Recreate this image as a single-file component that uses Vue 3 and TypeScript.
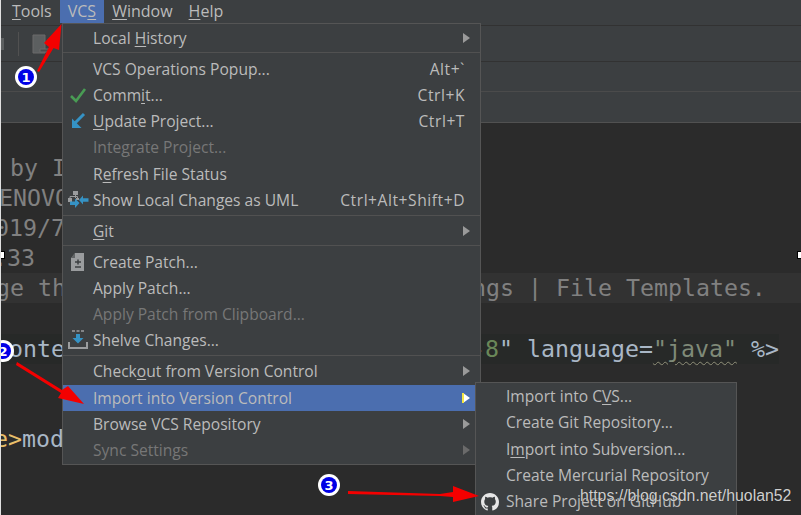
<script setup lang="ts">
type Seg = { t: string; u?: boolean };
type Item = { sep?: boolean; label?: Seg[]; key?: string; sub?: boolean; off?: boolean; active?: boolean; icon?: string };
const s = (a: string, u = '', b = ''): Seg[] => [{ t: a }, { t: u, u: true }, { t: b }];
const items: Item[] = [
  { label: s('Local ', 'H', 'istory'), sub: true },
  { sep: true },
  { label: s('VCS Operations Popup...'), key: 'Alt+`' },
  { label: s('Comm', 'i', 't...'), key: 'Ctrl+K', icon: 'check' },
  { label: s('', 'U', 'pdate Project...'), key: 'Ctrl+T', icon: 'update' },
  { label: s('Inte', 'g', 'rate Project...'), off: true },
  { label: s('R', 'e', 'fresh File Status') },
  { label: s('Show Local Changes as UML'), key: 'Ctrl+Alt+Shift+D', icon: 'uml' },
  { sep: true },
  { label: s('', 'G', 'it'), sub: true },
  { sep: true },
  { label: s('Create Patch...'), icon: 'patch' },
  { label: s('Apply Patch...') },
  { label: s('Apply Patch from Clipboard...'), off: true },
  { label: s('Shelve Changes...'), icon: 'shelve' },
  { sep: true },
  { label: s('Check', 'o', 'ut from Version Control'), sub: true },
  { label: s('Import into Version Control'), sub: true, active: true },
  { label: s('Browse VCS Repository'), sub: true },
  { label: s('Sync Settings'), sub: true, off: true }
];
const subItems: { label: Seg[]; git?: boolean }[] = [
  { label: s('Import into C', 'V', 'S...') },
  { label: s('Create Git Repository...') },
  { label: s('I', 'm', 'port into Subversion...') },
  { label: s('Create Mercurial Repository') },
  { label: s('Share Project on GitHub'), git: true }
];
const bandLine = 'ge this template  use File | Settings | File Templates.';
</script>

<template>
  <div class="app">
    <header class="menubar">
      <span class="top"><u>T</u>ools</span>
      <span class="top on">VC<u>S</u></span>
      <span class="top"><u>W</u>indow</span>
      <span class="top"><u>H</u>elp</span>
    </header>
    <div class="toolbar">
      <i class="stub"></i>
      <i class="vline"></i>
      <svg class="device" width="20" height="20" viewBox="0 0 20 20">
        <path d="M1 1h12v18H1z" fill="#5c5f60" stroke="#6a6a6a" />
        <path d="M8 15h10v3H8z" fill="#4a4c4d" stroke="#6a6a6a" />
      </svg>
    </div>
    <div class="bar nav"></div>
    <div class="bar tabs"></div>
    <main class="editor">
      <div class="code gray shift-a">by I</div>
      <div class="code gray shift-b">ENOVO</div>
      <div class="code gray shift-c">019/7</div>
      <div class="code gray shift-d">.33</div>
      <div class="code gray band shift-e">{{ bandLine }}</div>
      <div class="code"></div>
      <div class="code dark shift-f">ontentType="text/html;charset=UTF-<span class="grn">8</span>" language=<span class="wavy">"java"</span> %&gt;</div>
      <div class="code"></div>
      <div class="code"></div>
      <div class="code shift-g"><span class="org">e&gt;</span>mod</div>
    </main>

    <nav class="menu">
      <template v-for="(it, i) in items" :key="i">
        <div v-if="it.sep" class="sep"></div>
        <div v-else class="row" :class="{ off: it.off, active: it.active }">
          <span class="ico">
            <svg v-if="it.icon === 'check'" width="18" height="18" viewBox="0 0 18 18">
              <path d="M2 10l5 5L16 3" fill="none" stroke="#499c54" stroke-width="2.6" />
            </svg>
            <svg v-else-if="it.icon === 'update'" width="18" height="18" viewBox="0 0 18 18">
              <path d="M15 2L6 11" fill="none" stroke="#3592c4" stroke-width="3" />
              <path d="M3 6.500V16h9.500z" fill="#3592c4" />
            </svg>
            <svg v-else-if="it.icon === 'uml'" width="22" height="20" viewBox="0 0 22 20">
              <path d="M6 1h5v4H6zM1 8h4v4H1zM9 8h3v2H9z" fill="#9a9c9e" />
              <path d="M8.500 5v3M3 8V6.500h7.500V8" stroke="#9a9c9e" fill="none" />
              <path d="M12 10l4-4.500v2.800h5.500v3.400H16V14.500z" fill="#3592c4" />
              <path d="M12.500 13l-4.500 5v-3H3v-3.500h5V8.500z" fill="#3592c4" />
            </svg>
            <svg v-else-if="it.icon === 'patch'" width="16" height="20" viewBox="0 0 16 20">
              <path d="M5 1h9v18H1V6z" fill="#9a9c9e" />
              <path d="M5 1v5H1z" fill="#3c3f41" opacity=".6" />
              <path d="M5 10h6M8 7.500v5M5 15h6" stroke="#3c3f41" stroke-width="1.500" fill="none" />
            </svg>
            <svg v-else-if="it.icon === 'shelve'" width="20" height="20" viewBox="0 0 20 20">
              <path d="M4 1h3M8.500 1h3M13 1h3" stroke="#9a9c9e" stroke-width="1.500" />
              <path d="M8 4h4v4h3.500L10 13.500 4.500 8H8z" fill="#3592c4" />
              <path d="M1 12v6h18v-6" fill="none" stroke="#9a9c9e" stroke-width="2" />
            </svg>
          </span>
          <span class="txt"><template v-for="(g, j) in it.label" :key="j"><u v-if="g.u">{{ g.t }}</u><template v-else>{{ g.t }}</template></template></span>
          <span v-if="it.key" class="key">{{ it.key }}</span>
          <i v-if="it.sub" class="tri"></i>
        </div>
      </template>
    </nav>

    <nav class="submenu">
      <div v-for="(it, i) in subItems" :key="i" class="subrow">
        <svg v-if="it.git" class="git" width="18" height="18" viewBox="0 0 16 16">
          <path fill="#e6e6e6" d="M8 0C3.580 0 0 3.580 0 8c0 3.540 2.290 6.530 5.470 7.590.4.070.55-.170.55-.380 0-.190-.010-.820-.010-1.490-2.010.370-2.530-.490-2.690-.940-.090-.230-.480-.940-.820-1.130-.280-.150-.680-.520-.010-.530.630-.010 1.080.580 1.230.820.720 1.210 1.870.870 2.330.660.070-.520.280-.870.510-1.070-1.780-.200-3.640-.890-3.640-3.950 0-.870.310-1.590.820-2.150-.080-.200-.360-1.020.080-2.120 0 0 .670-.210 2.200.820.640-.180 1.320-.270 2-.270s1.360.090 2 .270c1.530-1.040 2.200-.820 2.200-.820.440 1.100.160 1.920.080 2.120.510.560.820 1.270.820 2.150 0 3.070-1.870 3.750-3.650 3.950.290.250.540.730.540 1.480 0 1.070-.010 1.930-.010 2.200 0 .210.150.460.550.380A8.010 8.010 0 0 0 16 8c0-4.420-3.580-8-8-8z" />
        </svg>
        <span><template v-for="(g, j) in it.label" :key="j"><u v-if="g.u">{{ g.t }}</u><template v-else>{{ g.t }}</template></template></span>
      </div>
    </nav>

    <i class="handle hl"></i>
    <i class="handle hr"></i>
    <i class="yellow"></i>

    <svg class="marks" width="801" height="515" viewBox="0 0 801 515">
      <path d="M37 71L49 47 44 43 61.500 24 59 50 53.500 48 39 72z" fill="#f40000" />
      <path d="M17 362L62 390 68 386 84 404 58 398 61 393 16 365z" fill="#f40000" />
      <path d="M348 491L440 494 453 492 453 486 479 496 453 502 453 497 440 496 348 494z" fill="#f40000" />
      <g v-for="b in [{ x: 26, y: 77, n: '1' }, { x: 3, y: 351, n: '2' }, { x: 329, y: 485, n: '3' }]" :key="b.n">
        <circle :cx="b.x" :cy="b.y" r="11" fill="#fff" />
        <circle :cx="b.x" :cy="b.y" r="8" fill="#0000e6" />
        <text :x="b.x" :y="b.y + 4.500" text-anchor="middle" class="num">{{ b.n }}</text>
      </g>
    </svg>

    <div class="mark">https://blog.csdn.net/huolan52</div>
  </div>
</template>

<style scoped>
.app {
  position: relative;
  width: 801px;
  height: 515px;
  overflow: hidden;
  background: #3c3f41;
  display: flex;
  flex-direction: column;
  font-family: "Open Sans", "Noto Sans", sans-serif;
  color: #bbb;
  border-left: 1px solid #e0e0e0;
  box-sizing: border-box;
}
u { text-decoration-thickness: 1px; text-underline-offset: 2px; }
.menubar {
  height: 25px;
  flex: none;
  display: flex;
  align-items: flex-start;
  padding-left: 3px;
  border-bottom: 1px solid #323232;
  font-size: 16px;
  box-sizing: content-box;
}
.top { height: 23px; line-height: 22px; padding: 0 8px; }
.top.on { background: #4b6eaf; }
.toolbar {
  height: 35px;
  flex: none;
  display: flex;
  align-items: center;
  border-bottom: 1px solid #323232;
}
.stub { width: 3px; height: 12px; background: #5c5f60; }
.vline { width: 1px; height: 24px; background: #515151; margin-left: 14px; }
.device { margin-left: 13px; }
.bar { flex: none; box-sizing: border-box; }
.nav { height: 30px; border-bottom: 1px solid #4b4b4b; }
.tabs { height: 31px; border-bottom: 1px solid #515151; }
.editor {
  flex: 1;
  background: #2b2b2b;
  padding-top: 30px;
  overflow: hidden;
}
.code {
  height: 30.100px;
  line-height: 30px;
  font-family: "DejaVu Sans Mono", monospace;
  font-size: 23.250px;
  white-space: pre;
  color: #a9b7c6;
}
.gray { color: #808080; }
.band { background: #323232; }
.dark { background: #272928; width: 778px; }
.grn { color: #6a8759; }
.org { color: #e8bf6a; }
.wavy { color: #7f8a78; text-decoration: underline wavy #8f8f78 1px; text-underline-offset: 4px; }
.shift-a { text-indent: 9px; }
.shift-b { text-indent: -2px; }
.shift-c { text-indent: -6px; }
.shift-d { text-indent: -8px; }
.shift-e { text-indent: -5px; }
.shift-f { text-indent: 8px; }
.shift-g { text-indent: -7px; }

.menu {
  position: absolute;
  left: 61px;
  top: 23px;
  width: 419px;
  box-sizing: border-box;
  border: 1px solid #555;
  background: #3c3f41;
  font-size: 15.600px;
  height: 442px;
  padding-top: .6px;
}
.row {
  position: relative;
  height: 26.250px;
  line-height: 26px;
  padding-left: 30px;
  display: flex;
  white-space: nowrap;
}
.sep { height: 1px; margin: 1.500px 0 2.200px; background: #515151; }
.row.off { color: #777; }
.row.active { background: #4b6eaf; }
.ico { position: absolute; left: 3px; top: 0; width: 24px; height: 26px; display: flex; align-items: center; justify-content: center; }
.key { margin-left: auto; margin-right: 15px; letter-spacing: .55px; }
.tri {
  position: absolute;
  right: 10px;
  top: 8px;
  border-left: 7px solid #9a9a9a;
  border-top: 5px solid transparent;
  border-bottom: 5px solid transparent;
}
.row.off .tri { border-left-color: #6a6a6a; }
.row.active .tri { border-left-color: #fff; }

.submenu {
  position: absolute;
  left: 474px;
  top: 382px;
  width: 262px;
  height: 140px;
  box-sizing: border-box;
  background: #3c3f41;
  border: 1px solid #555;
  font-size: 15.600px;
}
.subrow {
  position: relative;
  height: 26.300px;
  line-height: 26px;
  padding-left: 30px;
  white-space: nowrap;
}
.git { position: absolute; left: 5px; top: 5px; }

.handle {
  position: absolute;
  top: 251px;
  width: 3px;
  height: 6px;
  background: #fff;
  border: 1px solid #000;
}
.hl { left: -1px; }
.hr { right: -1px; }
.yellow {
  position: absolute;
  left: 461px;
  top: 393px;
  width: 2px;
  height: 10px;
  background: #f5e642;
}
.marks { position: absolute; left: -1px; top: 0; pointer-events: none; }
.num { fill: #fff; font: bold 13px "DejaVu Sans", sans-serif; }
.mark {
  position: absolute;
  left: 579px;
  top: 487px;
  font-family: "Liberation Sans", Arial, sans-serif;
  font-size: 15.850px;
  line-height: 18px;
  color: #cfcfcf;
  white-space: nowrap;
  text-shadow: 0 0 1px #222;
}
</style>
